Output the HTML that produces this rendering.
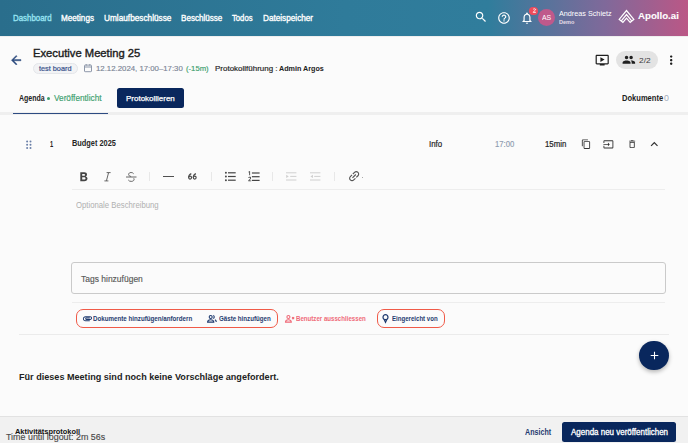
<!DOCTYPE html>
<html><head><meta charset="utf-8">
<style>
*{margin:0;padding:0;box-sizing:border-box}
html,body{width:688px;height:443px;overflow:hidden;background:#fbfbfb;font-family:"Liberation Sans",sans-serif;color:#222}
.a{position:absolute}
.t{position:absolute;white-space:nowrap;line-height:1;transform-origin:0 0}
svg{position:absolute;display:block;overflow:visible}
</style></head><body>
<!-- header -->
<div class="a" style="left:0;top:0;width:688px;height:35.6px;background:linear-gradient(90deg,#2a6e8c 0%,#2f7b9a 50%,#307d9c 71%,#80699a 88%,#bb5786 100%)"></div>
<div class="a" style="left:0;top:35.6px;width:688px;height:1.2px;background:linear-gradient(#e4e4e4,#f8f8f8)"></div>

<svg style="left:474px;top:10px" width="14" height="14" viewBox="0 0 24 24"><path fill="#fff" d="M15.5 14h-.79l-.28-.27C15.41 12.59 16 11.11 16 9.5 16 5.91 13.09 3 9.5 3S3 5.91 3 9.5 5.91 16 9.5 16c1.61 0 3.09-.59 4.23-1.57l.27.28v.79l5 4.99L20.49 19l-4.99-5zm-6 0C7.01 14 5 11.99 5 9.5S7.01 5 9.5 5 14 7.01 14 9.5 11.99 14 9.5 14z"/></svg>
<svg style="left:497px;top:11px" width="14" height="14" viewBox="0 0 24 24"><path fill="#fff" d="M11 18h2v-2h-2v2zm1-16C6.48 2 2 6.48 2 12s4.48 10 10 10 10-4.48 10-10S17.52 2 12 2zm0 18c-4.41 0-8-3.59-8-8s3.59-8 8-8 8 3.59 8 8-3.59 8-8 8zm0-14c-2.21 0-4 1.79-4 4h2c0-1.1.9-2 2-2s2 .9 2 2c0 2-3 1.75-3 5h2c0-2.25 3-2.5 3-5 0-2.21-1.79-4-4-4z"/></svg>
<svg style="left:520px;top:11px" width="14" height="14" viewBox="0 0 24 24"><path fill="#fff" d="M12 22c1.1 0 2-.9 2-2h-4c0 1.1.9 2 2 2zm6-6v-5c0-3.07-1.63-5.64-4.5-6.32V4c0-.83-.67-1.5-1.5-1.5s-1.5.67-1.5 1.5v.68C7.64 5.36 6 7.920 6 11v5l-2 2v1h16v-1l-2-2zm-2 1H8v-6c0-2.48 1.51-4.5 4-4.5s4 2.02 4 4.5v6z"/></svg>
<div class="a" style="left:529.4px;top:6.5px;width:8.7px;height:8.7px;border-radius:50%;background:#ee4b5c"></div>
<svg style="left:531.5px;top:8.3px" width="5" height="5" viewBox="0 0 5 5"><path fill="none" stroke="#fff" stroke-width="0.9" d="M1.2 1.4C1.6 0.6 3.6 0.6 3.6 1.6 3.6 2.4 1.3 3.4 1.2 4.3H3.9"/></svg>
<div class="a" style="left:537.9px;top:9.1px;width:17.4px;height:17.4px;border-radius:50%;background:#bf598b"></div>
<svg style="left:616px;top:7px" width="22" height="19" viewBox="0 0 22 19"><g fill="none" stroke="#fff" stroke-width="1.25" stroke-linejoin="miter"><path d="M3.2 12.4L10.5 3.5 17.8 12.4 14.2 15.3 10.5 11.2 6.9 15.3z"/><path d="M5.3 13.9L10.5 7.5 15.7 13.9"/></g></svg>

<!-- title area -->
<svg style="left:8.7px;top:53px" width="14.4" height="14.4" viewBox="0 0 24 24"><path fill="#2c4a7e" stroke="#2c4a7e" stroke-width="0.7" d="M20 11H7.83l5.59-5.59L12 4l-8 8 8 8 1.41-1.41L7.83 13H20v-2z"/></svg>
<div class="a" style="left:32.5px;top:62.6px;width:45.3px;height:11.7px;border-radius:6px;background:#f2f3f5;border:0.8px solid #e4e6ea"></div>
<svg style="left:84px;top:64.3px" width="8" height="8.2" viewBox="0 0 8 8.2"><g fill="none" stroke="#8e98aa" stroke-width="1"><rect x="0.5" y="1.1" width="7" height="6.6" rx="0.6"/><line x1="0.5" y1="3" x2="7.5" y2="3"/><line x1="2.2" y1="0" x2="2.2" y2="1.6"/><line x1="5.8" y1="0" x2="5.8" y2="1.6"/></g></svg>

<svg style="left:594.8px;top:53.1px" width="14.4" height="14.4" viewBox="0 0 24 24"><path fill="#1f1f1f" d="M21 3H3c-1.11 0-2 .89-2 2v12c0 1.1.89 2 2 2h5v2h8v-2h5c1.1 0 1.99-.9 1.99-2L23 5c0-1.11-.9-2-2-2zm0 14H3V5h18v12zM16 11l-7 4V7z"/></svg>
<div class="a" style="left:615.8px;top:51px;width:42.4px;height:18.2px;border-radius:9.1px;background:#e3e3e3"></div>
<svg style="left:622.1px;top:52.8px" width="13.7" height="13.7" viewBox="0 0 24 24"><path fill="#1f1f1f" d="M16 11c1.66 0 2.99-1.34 2.99-3S17.66 5 16 5c-1.66 0-3 1.34-3 3s1.34 3 3 3zm-8 0c1.66 0 2.99-1.34 2.99-3S9.66 5 8 5C6.34 5 5 6.34 5 8s1.34 3 3 3zm0 2c-2.33 0-7 1.17-7 3.5V19h14v-2.5c0-2.33-4.67-3.5-7-3.5zm8 0c-.29 0-.62.02-.97.05 1.16.84 1.970 1.97 1.97 3.45V19h6v-2.5c0-2.33-4.67-3.5-7-3.5z"/></svg>
<svg style="left:664.3px;top:52.8px" width="14.4" height="14.4" viewBox="0 0 24 24"><path fill="#1f1f1f" d="M12 8c1.1 0 2-.9 2-2s-.9-2-2-2-2 .9-2 2 .9 2 2 2zm0 2c-1.1 0-2 .9-2 2s.9 2 2 2 2-.9 2-2-.9-2-2-2zm0 6c-1.1 0-2 .9-2 2s.9 2 2 2 2-.9 2-2-.9-2-2-2z"/></svg>

<!-- tabs -->
<div class="a" style="left:47px;top:97px;width:3.4px;height:3.4px;border-radius:50%;background:#3a9d6c"></div>
<div class="a" style="left:116.5px;top:88.3px;width:67.4px;height:20.1px;border-radius:2.5px;background:#09275d"></div>
<div class="a" style="left:0;top:111.8px;width:688px;height:3px;background:#efefef"></div>
<div class="a" style="left:13px;top:112.5px;width:95px;height:1.6px;background:#2d4b82"></div>

<!-- row -->
<svg style="left:24.5px;top:139.5px" width="7" height="10" viewBox="0 0 7 10"><g fill="#6a7fa8"><circle cx="2.1" cy="1.4" r="1"/><circle cx="5.5" cy="1.4" r="1"/><circle cx="2.1" cy="4.7" r="1"/><circle cx="5.5" cy="4.7" r="1"/><circle cx="2.1" cy="8.1" r="1"/><circle cx="5.5" cy="8.1" r="1"/></g></svg>
<svg style="left:581px;top:138.8px" width="10.4" height="10.4" viewBox="0 0 24 24"><path fill="#333" d="M16 1H4c-1.1 0-2 .9-2 2v14h2V3h12V1zm3 4H8c-1.1 0-2 .9-2 2v14c0 1.1.9 2 2 2h11c1.1 0 2-.9 2-2V7c0-1.1-.9-2-2-2zm0 16H8V7h11v14z"/></svg>
<svg style="left:603.2px;top:139.3px" width="10.8" height="10.8" viewBox="0 0 24 24"><path fill="#333" d="M21 3.01H3c-1.1 0-2 .9-2 2V9h2V4.99h18v14.03H3V15H1v4.01c0 1.1.9 1.98 2 1.98h18c1.1 0 2-.88 2-1.98v-14c0-1.1-.9-2-2-2zM11 16l4-4-4-4v3H1v2h10v3z"/></svg>
<svg style="left:626.6px;top:139.3px" width="10.3" height="10.3" viewBox="0 0 24 24"><path fill="#333" d="M6 19c0 1.1.9 2 2 2h8c1.1 0 2-.9 2-2V7H6v12zM8 9h8v10H8V9zm7.5-5l-1-1h-5l-1 1H5v2h14V4z"/></svg>
<svg style="left:646.8px;top:137.3px" width="14.6" height="14.6" viewBox="0 0 24 24"><path fill="#333" d="M12 8l-6 6 1.41 1.41L12 10.83l4.59 4.58L18 14z"/></svg>

<!-- toolbar -->
<svg style="left:80px;top:172px" width="8" height="10" viewBox="0 0 8 10"><path fill="#444" d="M0.3 0.3H4.2C6 0.3 7 1.2 7 2.5 7 3.4 6.5 4.1 5.7 4.4 6.8 4.7 7.5 5.5 7.5 6.6 7.5 8.2 6.3 9.2 4.3 9.2H0.3zM2.2 1.9V3.8H4C4.7 3.8 5.1 3.4 5.1 2.8 5.1 2.2 4.7 1.9 4 1.9zM2.2 5.3V7.6H4.2C5 7.6 5.5 7.2 5.5 6.5 5.5 5.7 5 5.3 4.2 5.3z"/></svg>
<svg style="left:103.5px;top:172.3px" width="7" height="10" viewBox="0 0 7 10"><path fill="none" stroke="#666" stroke-width="1" d="M2.6 0.6H6.6M0.4 8.9H4.4M4.6 0.6L2.4 8.9"/></svg>
<svg style="left:126px;top:172px" width="10.5" height="10" viewBox="0 0 10.5 10"><path fill="none" stroke="#666" stroke-width="1" d="M7.6 1.7C7.1 0.9 6.2 0.5 5.1 0.5 3.6 0.5 2.6 1.3 2.6 2.5 2.6 3.5 3.3 4.1 5.1 4.5M0 5H10.5M7.8 6.3C8 6.6 8.1 7 8.1 7.3 8.1 8.6 6.9 9.4 5.2 9.4 3.9 9.4 2.8 8.9 2.3 8"/></svg>
<div class="a" style="left:149.3px;top:172.2px;width:1px;height:9.2px;background:#e8e8e8"></div>
<div class="a" style="left:163.2px;top:176px;width:10.6px;height:1.4px;background:#505050"></div>
<svg style="left:188px;top:173.4px" width="9" height="7" viewBox="0 0 9 7"><g fill="none" stroke="#4a4a4a" stroke-width="1.15"><circle cx="2.1" cy="4.6" r="1.45"/><path d="M3.3 0.6C1.7 1.2 0.65 2.6 0.65 4.6"/><circle cx="6.7" cy="4.6" r="1.45"/><path d="M7.9 0.6C6.3 1.2 5.25 2.6 5.25 4.6"/></g></svg>
<div class="a" style="left:211.1px;top:172.2px;width:1px;height:9.2px;background:#e8e8e8"></div>
<svg style="left:224.7px;top:171px" width="11" height="11" viewBox="0 0 11 11"><g fill="#444"><circle cx="0.9" cy="1.8" r="0.95"/><circle cx="0.9" cy="5.5" r="0.95"/><circle cx="0.9" cy="9.2" r="0.95"/><rect x="3" y="1.2" width="7.7" height="1.2"/><rect x="3" y="4.9" width="7.7" height="1.2"/><rect x="3" y="8.6" width="7.7" height="1.2"/></g></svg>
<svg style="left:247.7px;top:170.8px" width="12" height="11" viewBox="0 0 12 11"><g fill="#444"><rect x="3.9" y="1.4" width="7.7" height="1.2"/><rect x="3.9" y="5.1" width="7.7" height="1.2"/><rect x="3.9" y="8.8" width="7.7" height="1.2"/><path d="M1.2 0.3H2.1V4.3H1.2V1.3L0.5 1.6V0.8z"/><path d="M0.3 6.9C0.5 6.1 1.2 5.8 1.8 5.8 2.6 5.8 3.1 6.3 3.1 7 3.1 7.8 2.2 8.5 1.4 9.4H3.2V10.2H0.3V9.5C1.2 8.6 2.2 7.8 2.2 7.1 2.2 6.8 2 6.6 1.7 6.6 1.4 6.6 1.2 6.8 1.1 7.1z"/></g></svg>
<div class="a" style="left:271.9px;top:172.2px;width:1px;height:9.2px;background:#e8e8e8"></div>
<svg style="left:286px;top:171px" width="11" height="11" viewBox="0 0 11 11"><g fill="#d0d0d0"><rect x="0" y="1.3" width="10.4" height="1"/><rect x="4.2" y="4.9" width="6.2" height="1"/><rect x="0" y="8.5" width="10.4" height="1"/><path d="M0.2 3.7L2.8 5.4 0.2 7.1z"/></g></svg>
<svg style="left:310px;top:171px" width="11" height="11" viewBox="0 0 11 11"><g fill="#d0d0d0"><rect x="0" y="1.3" width="10.4" height="1"/><rect x="4.2" y="4.9" width="6.2" height="1"/><rect x="0" y="8.5" width="10.4" height="1"/><path d="M3 3.7L0.4 5.4 3 7.1z"/></g></svg>
<div class="a" style="left:334.2px;top:172.2px;width:1px;height:9.2px;background:#e8e8e8"></div>
<svg style="left:346.75px;top:169.25px" width="14.3" height="14.3" viewBox="0 0 24 24"><path fill="#555" transform="rotate(-45 12 12)" d="M3.9 12c0-1.71 1.39-3.1 3.1-3.1h4V7H7c-2.76 0-5 2.24-5 5s2.24 5 5 5h4v-1.9H7c-1.71 0-3.1-1.39-3.1-3.1zM8 13h8v-2H8v2zm9-6h-4v1.9h4c1.71 0 3.1 1.39 3.1 3.1s-1.39 3.1-3.1 3.1h-4V17h4c2.76 0 5-2.24 5-5s-2.24-5-5-5z"/></svg>
<div class="a" style="left:361.5px;top:177px;width:0.8px;height:0.8px;background:#aaa"></div>
<div class="a" style="left:72px;top:188.8px;width:593px;height:1px;background:#ededed"></div>

<!-- tags -->
<div class="a" style="left:71.3px;top:262.3px;width:594.4px;height:31.6px;border:1px solid #cacaca;border-radius:3px"></div>
<div class="a" style="left:72px;top:301.7px;width:593px;height:1px;background:#ededed"></div>

<!-- action buttons -->
<div class="a" style="left:75.9px;top:308.6px;width:202px;height:19.6px;border:1.5px solid #f05a48;border-radius:7px"></div>
<div class="a" style="left:376.8px;top:308.6px;width:68.6px;height:19.6px;border:1.5px solid #f05a48;border-radius:7px"></div>
<svg style="left:81.5px;top:312.5px" width="11" height="11" viewBox="0 0 24 24"><path fill="#1f3b70" d="M2 12.5C2 9.46 4.46 7 7.5 7H18c2.21 0 4 1.79 4 4s-1.79 4-4 4H9.5C8.12 15 7 13.88 7 12.5S8.12 10 9.5 10H17v2H9.41c-.55 0-.55 1 0 1H18c1.1 0 2-.9 2-2s-.9-2-2-2H7.5C5.57 9 4 10.57 4 12.5S5.57 16 7.5 16H17v2H7.5C4.46 18 2 15.54 2 12.5z"/></svg>
<svg style="left:207px;top:314.5px" width="10" height="8" viewBox="0 0 10 8"><g fill="none" stroke="#1f3b70" stroke-width="1.1"><circle cx="3.7" cy="2" r="1.5"/><path d="M0.6 7.1c0-1.5 1.3-2.4 3.1-2.4s3.1 0.9 3.1 2.4z"/><path d="M6.2 0.5a1.6 1.6 0 0 1 0 3M7.9 4.8c0.9 0.4 1.4 1.2 1.4 2.3"/></g></svg>
<svg style="left:285px;top:314.5px" width="10" height="8" viewBox="0 0 10 8"><g fill="none" stroke="#ef6a78" stroke-width="1.1"><circle cx="3.4" cy="2" r="1.5"/><path d="M0.5 7.1c0-1.5 1.3-2.4 2.9-2.4s2.9 0.9 2.9 2.4z"/><path d="M7.1 2.1l2 2M9.1 2.1l-2 2"/></g></svg>
<svg style="left:382px;top:314px" width="7" height="9" viewBox="0 0 7 9"><g fill="none" stroke="#1f3b70" stroke-width="1.2"><circle cx="3.5" cy="3.2" r="2.5"/><path d="M2.2 5.5L3.5 8.3 4.8 5.5"/></g></svg>
<div class="a" style="left:19px;top:334.2px;width:650px;height:1px;background:#ebebeb"></div>

<!-- FAB -->
<div class="a" style="left:639.3px;top:340.9px;width:29.6px;height:29.6px;border-radius:50%;background:#09275d;box-shadow:0 2px 4px rgba(0,0,0,.28)"></div>
<svg style="left:647.5px;top:349px" width="13" height="13" viewBox="0 0 24 24"><path fill="#fff" d="M19 13h-6v6h-2v-6H5v-2h6V5h2v6h6v2z"/></svg>

<!-- footer -->
<div class="a" style="left:0;top:416px;width:688px;height:27px;background:#f1f1f1;border-top:1.2px solid #e2e2e2"></div>
<div class="a" style="left:562px;top:422.3px;width:114.4px;height:20px;border-radius:2.5px;background:#09275d"></div>

<div class="t" style="left:12.60px;top:14.00px;font-size:8.87px;font-weight:normal;color:#98e4f2;transform:scaleX(0.891);-webkit-text-stroke:0.35px currentColor">Dashboard</div>
<div class="t" style="left:61.00px;top:14.00px;font-size:8.87px;font-weight:normal;color:#ffffff;transform:scaleX(0.917);-webkit-text-stroke:0.35px currentColor">Meetings</div>
<div class="t" style="left:104.00px;top:14.00px;font-size:8.87px;font-weight:normal;color:#ffffff;transform:scaleX(0.932);-webkit-text-stroke:0.35px currentColor">Umlaufbeschlüsse</div>
<div class="t" style="left:181.00px;top:14.00px;font-size:8.87px;font-weight:normal;color:#ffffff;transform:scaleX(0.912);-webkit-text-stroke:0.35px currentColor">Beschlüsse</div>
<div class="t" style="left:232.40px;top:14.00px;font-size:8.87px;font-weight:normal;color:#ffffff;transform:scaleX(0.867);-webkit-text-stroke:0.35px currentColor">Todos</div>
<div class="t" style="left:263.20px;top:14.00px;font-size:8.87px;font-weight:normal;color:#ffffff;transform:scaleX(0.924);-webkit-text-stroke:0.35px currentColor">Dateispeicher</div>
<div class="t" style="left:542.00px;top:14.00px;font-size:7.27px;font-weight:normal;color:#ffffff;transform:scaleX(0.946);">AS</div>
<div class="t" style="left:558.80px;top:10.00px;font-size:7.27px;font-weight:normal;color:#ffffff;transform:scaleX(0.995);">Andreas Schietz</div>
<div class="t" style="left:558.80px;top:20.00px;font-size:5.67px;font-weight:bold;color:#e6dde8;transform:scaleX(0.984);">Demo</div>
<div class="t" style="left:638.10px;top:11.00px;font-size:9.74px;font-weight:bold;color:#ffffff;transform:scaleX(0.994);-webkit-text-stroke:0.1px currentColor">Apollo.ai</div>
<div class="t" style="left:33.40px;top:47.00px;font-size:11.77px;font-weight:normal;color:#202020;transform:scaleX(0.954);-webkit-text-stroke:0.4px currentColor">Executive Meeting 25</div>
<div class="t" style="left:39.00px;top:65.00px;font-size:7.70px;font-weight:normal;color:#36508a;transform:scaleX(0.949);-webkit-text-stroke:0.2px currentColor">test board</div>
<div class="t" style="left:95.70px;top:65.00px;font-size:7.85px;font-weight:normal;color:#7b8596;transform:scaleX(0.995);-webkit-text-stroke:0.15px currentColor">12.12.2024, 17:00–17:30</div>
<div class="t" style="left:185.60px;top:65.00px;font-size:7.85px;font-weight:normal;color:#3a9d6c;transform:scaleX(0.981);-webkit-text-stroke:0.15px currentColor">(-15m)</div>
<div class="t" style="left:214.90px;top:65.00px;font-size:7.85px;font-weight:normal;color:#2a2a2a;transform:scaleX(1.018);-webkit-text-stroke:0.2px currentColor">Protokollführung :</div>
<div class="t" style="left:279.40px;top:65.00px;font-size:7.85px;font-weight:bold;color:#222222;transform:scaleX(0.916);">Admin Argos</div>
<div class="t" style="left:638.90px;top:57.00px;font-size:7.99px;font-weight:normal;color:#3a3a3a;transform:scaleX(1.046);">2/2</div>
<div class="t" style="left:18.80px;top:94.00px;font-size:8.58px;font-weight:bold;color:#222222;transform:scaleX(0.816);">Agenda</div>
<div class="t" style="left:54.00px;top:94.00px;font-size:8.58px;font-weight:normal;color:#3a9d6c;transform:scaleX(0.961);-webkit-text-stroke:0.15px currentColor">Veröffentlicht</div>
<div class="t" style="left:125.70px;top:95.00px;font-size:7.70px;font-weight:normal;color:#ffffff;transform:scaleX(1.038);-webkit-text-stroke:0.25px currentColor">Protokollieren</div>
<div class="t" style="left:621.50px;top:94.00px;font-size:8.43px;font-weight:bold;color:#222222;transform:scaleX(0.897);">Dokumente</div>
<div class="t" style="left:663.60px;top:94.00px;font-size:8.43px;font-weight:normal;color:#a3adbb;transform:scaleX(1.040);">0</div>
<div class="t" style="left:49.90px;top:140.00px;font-size:8.43px;font-weight:bold;color:#222222;transform:scaleX(0.680);">1</div>
<div class="t" style="left:72.00px;top:139.00px;font-size:8.43px;font-weight:bold;color:#262626;transform:scaleX(0.877);">Budget 2025</div>
<div class="t" style="left:428.90px;top:140.00px;font-size:8.43px;font-weight:normal;color:#262626;transform:scaleX(0.933);-webkit-text-stroke:0.2px currentColor">Info</div>
<div class="t" style="left:494.50px;top:141.00px;font-size:8.14px;font-weight:normal;color:#8f9bb0;transform:scaleX(0.946);-webkit-text-stroke:0.15px currentColor">17:00</div>
<div class="t" style="left:545.20px;top:141.00px;font-size:8.14px;font-weight:normal;color:#262626;transform:scaleX(0.962);-webkit-text-stroke:0.2px currentColor">15min</div>
<div class="t" style="left:76.20px;top:201.00px;font-size:8.72px;font-weight:normal;color:#b0b0b0;transform:scaleX(0.888);">Optionale Beschreibung</div>
<div class="t" style="left:80.90px;top:276.00px;font-size:8.14px;font-weight:normal;color:#5a5a5a;transform:scaleX(1.045);-webkit-text-stroke:0.15px currentColor">Tags hinzufügen</div>
<div class="t" style="left:93.20px;top:316.00px;font-size:6.83px;font-weight:bold;color:#1f3b70;transform:scaleX(0.908);">Dokumente hinzufügen/anfordern</div>
<div class="t" style="left:218.50px;top:316.00px;font-size:6.83px;font-weight:bold;color:#1f3b70;transform:scaleX(0.902);">Gäste hinzufügen</div>
<div class="t" style="left:296.20px;top:316.00px;font-size:6.83px;font-weight:bold;color:#ef6a78;transform:scaleX(0.897);">Benutzer ausschliessen</div>
<div class="t" style="left:392.00px;top:316.00px;font-size:6.83px;font-weight:bold;color:#1f3b70;transform:scaleX(0.891);">Eingereicht von</div>
<div class="t" style="left:18.60px;top:372.00px;font-size:9.74px;font-weight:bold;color:#222222;transform:scaleX(0.933);">Für dieses Meeting sind noch keine Vorschläge angefordert.</div>
<div class="t" style="left:6.20px;top:432.00px;font-size:9.74px;font-weight:normal;color:#4a4a4a;transform:scaleX(0.915);-webkit-text-stroke:0.15px currentColor">Time until logout: 2m 56s</div>
<div class="t" style="left:14.80px;top:428.00px;font-size:7.41px;font-weight:bold;color:#111111;transform:scaleX(1.002);">Aktivitätsprotokoll</div>
<div class="t" style="left:525.10px;top:429.00px;font-size:8.14px;font-weight:bold;color:#1f3b70;transform:scaleX(0.877);">Ansicht</div>
<div class="t" style="left:571.10px;top:429.00px;font-size:8.14px;font-weight:normal;color:#ffffff;transform:scaleX(0.982);-webkit-text-stroke:0.3px currentColor">Agenda neu veröffentlichen</div>
</body></html>
